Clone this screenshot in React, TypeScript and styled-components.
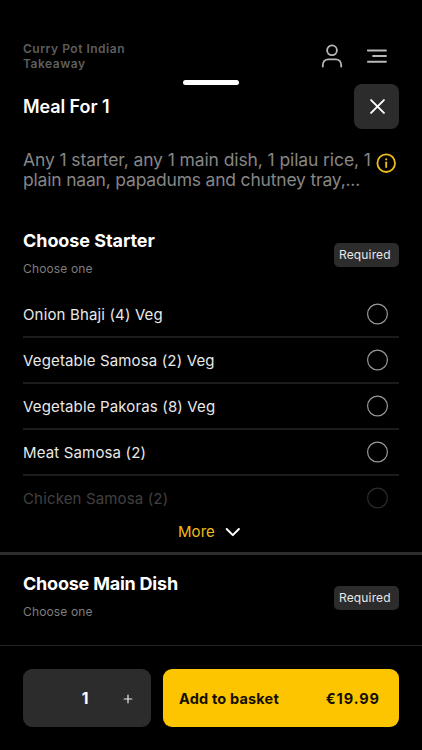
import React from 'react';
import styled, { createGlobalStyle } from 'styled-components';

const Global = createGlobalStyle`
  * { box-sizing: border-box; }
  body { margin: 0; background: #000; }
  button { font: inherit; border: 0; padding: 0; margin: 0; cursor: pointer; }
`;

const Screen = styled.main`
  display: flex;
  flex-direction: column;
  width: 422px;
  height: 750px;
  overflow: hidden;
  background: #000;
  color: #fff;
  font-family: Inter, 'Liberation Sans', sans-serif;
`;

const TopBar = styled.header`
  display: flex;
  justify-content: space-between;
  height: 80px;
  padding: 41px 35px 0 23px;
  color: #b9b9b9;
  flex: none;
`;

const Brand = styled.div`
  width: 130px;
  font-size: 12px;
  line-height: 15px;
  font-weight: 600;
  letter-spacing: 0.51px;
  color: #5e5e5e;
`;

const TopActions = styled.div`
  display: flex;
  gap: 24px;
  padding-top: 3px;

  svg { display: block; }
`;

const Handle = styled.div`
  width: 56px;
  height: 5px;
  margin: 0 auto;
  border-radius: 3px;
  background: #fff;
  flex: none;
`;

const TitleRow = styled.div`
  display: flex;
  align-items: center;
  justify-content: space-between;
  height: 45px;
  margin: -1px 23px 0;
  flex: none;
`;

const Title = styled.h1<{ $spacing?: string; $weight?: number }>`
  margin: 0;
  font-size: 18px;
  line-height: 22px;
  font-weight: ${p => p.$weight ?? 600};
  letter-spacing: ${p => p.$spacing ?? '0'};
`;

const CloseButton = styled.button`
  display: grid;
  place-items: center;
  width: 45px;
  height: 45px;
  padding-left: 1px;
  border-radius: 8px;
  background: #2c2c2c;
`;

const Description = styled.div`
  display: flex;
  justify-content: space-between;
  height: 80px;
  padding: 21px 26px 0 23px;
  flex: none;

  svg { flex: none; margin-top: 3px; }
`;

const DescriptionText = styled.p`
  margin: 0;
  font-size: 17.5px;
  line-height: 20px;
  color: #868686;
  white-space: nowrap;
`;

const DescriptionLine = styled.span<{ $spacing: string }>`
  display: block;
  letter-spacing: ${p => p.$spacing};
`;

const SectionHead = styled.div`
  display: flex;
  justify-content: space-between;
  align-items: flex-start;
  height: 83px;
  padding: 21px 23px 0;
  flex: none;
`;

const Hint = styled.p`
  margin: 9px 0 0;
  font-size: 12px;
  line-height: 15px;
  letter-spacing: 0.15px;
  color: #7d7d7d;
`;

const Badge = styled.span`
  width: 65px;
  height: 24px;
  margin-top: 13px;
  padding-left: 5px;
  border-radius: 5px;
  background: #2c2c2c;
  color: #e8e8e8;
  font-size: 12px;
  line-height: 24px;
  letter-spacing: 0.15px;
`;

const Options = styled.ul`
  list-style: none;
  margin: 0 23px;
  padding: 0;
  flex: none;
`;

const Option = styled.li<{ $faded?: boolean }>`
  display: flex;
  align-items: center;
  justify-content: space-between;
  height: 46px;
  padding-right: 11px;
  border-bottom: 2px solid ${p => (p.$faded ? 'transparent' : '#1c1c1c')};
  color: ${p => (p.$faded ? '#404040' : '#e9e9e9')};
  font-size: 15px;

  svg { flex: none; }
`;

const OptionLabel = styled.span`
  letter-spacing: 0.15px;
`;

const More = styled.button`
  display: flex;
  align-items: center;
  gap: 10px;
  height: 30px;
  padding: 0 0 11px 178px;
  background: transparent;
  color: #f0bd1c;
  font-size: 15px;
  letter-spacing: 0.05px;
  flex: none;

  svg { margin-top: 1px; }
`;

const Divider = styled.div`
  height: 3px;
  background: #2d2d2d;
  flex: none;
`;

const NextSection = styled.section`
  height: 90px;
  flex: none;

  ${SectionHead} { padding-top: 18px; }
`;

const Footer = styled.footer`
  display: flex;
  gap: 12px;
  padding: 23px 23px;
  border-top: 1px solid #242424;
`;

const Quantity = styled.div`
  display: grid;
  grid-template-columns: 1fr 18px 1fr;
  align-items: center;
  width: 128px;
  height: 58px;
  padding-right: 4px;
  border-radius: 9px;
  background: #2c2c2c;
  font-size: 15.5px;
  font-weight: 700;
  text-align: center;

  svg { justify-self: center; margin: 1px 0 0 14px; }
`;

const AddButton = styled.button`
  && {
    display: flex;
    align-items: center;
    justify-content: space-between;
    flex: 1;
    height: 58px;
    padding: 1px 19px 0 16px;
    border-radius: 9px;
    background: #fdc500;
    color: #130f02;
    font-size: 14.5px;
    font-weight: 700;
  }
`;

const AddLabel = styled.span`
  letter-spacing: 0.18px;
`;

const Price = styled.span`
  letter-spacing: 0.95px;
`;

const UserIcon = () => (
  <svg width="22" height="24" viewBox="0 0 22 24" fill="none" stroke="currentColor" strokeWidth="1.8" strokeLinecap="round">
    <circle cx="11" cy="6.3" r="4.9" />
    <path d="M1.8 22.5v-1.3c0-3.5 2.3-5.8 5.6-5.8h7.2c3.3 0 5.6 2.3 5.6 5.8v1.3" />
  </svg>
);

const MenuIcon = () => (
  <svg width="20" height="24" viewBox="0 0 20 24" fill="none" stroke="currentColor" strokeWidth="2" strokeLinecap="round">
    <path d="M.9 6.4h18M6.1 12h12.8M.9 17.7h18" />
  </svg>
);

const CloseIcon = () => (
  <svg width="15" height="15" viewBox="0 0 15 15" fill="none" stroke="#fff" strokeWidth="1.9" strokeLinecap="round">
    <path d="M1.1 1.1l12.8 12.8M13.9 1.1L1.1 13.9" />
  </svg>
);

const InfoIcon = () => (
  <svg width="20" height="20" viewBox="0 0 20 20" fill="none" stroke="#f0bd1c" strokeLinecap="round">
    <circle cx="10.2" cy="10.2" r="8.8" strokeWidth="1.8" />
    <path d="M10.2 9.3v4.7" strokeWidth="1.8" />
    <circle cx="10.2" cy="6.3" r="1.1" fill="#f0bd1c" stroke="none" />
  </svg>
);

const ChevronIcon = () => (
  <svg width="16" height="10" viewBox="0 0 16 10" fill="none" stroke="#fff" strokeWidth="2" strokeLinecap="round" strokeLinejoin="round">
    <path d="M1.7 2l6.1 6.1L13.9 2" />
  </svg>
);

const PlusIcon = () => (
  <svg width="10" height="10" viewBox="0 0 10 10" fill="none" stroke="#eee" strokeWidth="1.2">
    <path d="M5 .7v8.6M.7 5h8.6" />
  </svg>
);

const Radio = ({ faded }: { faded?: boolean }) => (
  <svg width="21" height="22" viewBox="0 0 21 22" fill="none" stroke={faded ? '#2d2d2d' : '#9a9a9a'} strokeWidth="1.2">
    <circle cx="10.5" cy="11" r="9.9" />
  </svg>
);

const starters = [
  { name: 'Onion Bhaji (4) Veg' },
  { name: 'Vegetable Samosa (2) Veg' },
  { name: 'Vegetable Pakoras (8) Veg' },
  { name: 'Meat Samosa (2)' },
  { name: 'Chicken Samosa (2)', faded: true },
];

const ChoiceHeader = ({ title, spacing }: { title: string; spacing: string }) => (
  <SectionHead>
    <div>
      <Title as="h2" $spacing={spacing} $weight={650}>{title}</Title>
      <Hint>Choose one</Hint>
    </div>
    <Badge>Required</Badge>
  </SectionHead>
);

export default function App() {
  return (
    <>
      <Global />
      <Screen>
        <TopBar>
          <Brand>Curry Pot Indian Takeaway</Brand>
          <TopActions>
            <UserIcon />
            <MenuIcon />
          </TopActions>
        </TopBar>
        <Handle />
        <TitleRow>
          <Title $spacing="-0.08px">Meal For 1</Title>
          <CloseButton aria-label="Close"><CloseIcon /></CloseButton>
        </TitleRow>
        <Description>
          <DescriptionText>
            <DescriptionLine $spacing="-0.1px">Any 1 starter, any 1 main dish, 1 pilau rice, 1</DescriptionLine>
            <DescriptionLine $spacing="-0.19px">plain naan, papadums and chutney tray,...</DescriptionLine>
          </DescriptionText>
          <InfoIcon />
        </Description>
        <ChoiceHeader title="Choose Starter" spacing="-0.07px" />
        <Options>
          {starters.map(s => (
            <Option key={s.name} $faded={s.faded}>
              <OptionLabel>{s.name}</OptionLabel>
              <Radio faded={s.faded} />
            </Option>
          ))}
        </Options>
        <More>More <ChevronIcon /></More>
        <Divider />
        <NextSection>
          <ChoiceHeader title="Choose Main Dish" spacing="-0.22px" />
        </NextSection>
        <Footer>
          <Quantity>
            <span />
            <span>1</span>
            <PlusIcon />
          </Quantity>
          <AddButton>
            <AddLabel>Add to basket</AddLabel>
            <Price>€19.99</Price>
          </AddButton>
        </Footer>
      </Screen>
    </>
  );
}
